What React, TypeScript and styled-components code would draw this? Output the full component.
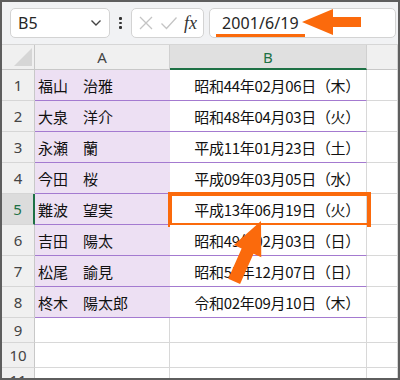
import styled, { createGlobalStyle } from "styled-components";

const GlobalStyle = createGlobalStyle`
  html, body {
    margin: 0;
    padding: 0;
    background: #ffffff;
  }
  body {
    font-family: "Noto Sans", "Noto Sans CJK JP", sans-serif;
  }
`;

const ORANGE = "#fb6a0c";
const GREEN = "#1e7145";
const PURPLE = "#a47ad0";

const people = [
  { name: "福山　治雅", date: "昭和44年02月06日（木）" },
  { name: "大泉　洋介", date: "昭和48年04月03日（火）" },
  { name: "永瀬　蘭", date: "平成11年01月23日（土）" },
  { name: "今田　桜", date: "平成09年03月05日（水）" },
  { name: "難波　望実", date: "平成13年06月19日（火）" },
  { name: "吉田　陽太", date: "昭和49年02月03日（日）" },
  { name: "松尾　諭見", date: "昭和55年12月07日（日）" },
  { name: "柊木　陽太郎", date: "令和02年09月10日（木）" },
];

const SELECTED_ROW = 5;

export default function App() {
  return (
    <>
      <GlobalStyle />
      <Frame>
        <Toolbar>
          <NameBox>
            <span>B5</span>
            <svg width="12" height="8" viewBox="0 0 12 8">
              <path d="M1.5 1.5 L6 6 L10.5 1.5" fill="none" stroke="#444" strokeWidth="1.4" />
            </svg>
          </NameBox>
          <Dots>
            <i />
            <i />
            <i />
          </Dots>
          <FuncBox>
            <svg width="16" height="16" viewBox="0 0 16 16">
              <path d="M2 2 L14 14 M14 2 L2 14" stroke="#c4c4c4" strokeWidth="1.3" fill="none" />
            </svg>
            <svg width="18" height="16" viewBox="0 0 18 16">
              <path d="M1.5 8.5 L6.5 13.5 L16.5 2.5" stroke="#c4c4c4" strokeWidth="1.3" fill="none" />
            </svg>
            <FxLabel>fx</FxLabel>
          </FuncBox>
          <FormulaBox>
            <FormulaText>2001/6/19</FormulaText>
          </FormulaBox>
        </Toolbar>

        <Sheet>
          <Row $height={25}>
            <Corner>
              <svg width="18" height="18" viewBox="0 0 18 18">
                <path d="M18 0 L18 18 L0 18 Z" fill="#d6d6d6" />
              </svg>
            </Corner>
            <ColHead $width={135}>A</ColHead>
            <ColHead $width={197} $active>B</ColHead>
            <ColHead $fill />
          </Row>

          {people.map((p, i) => {
            const n = i + 1;
            const active = n === SELECTED_ROW;
            return (
              <Row key={n} $height={31}>
                <RowHead $active={active}>{n}</RowHead>
                <NameCell>{p.name}</NameCell>
                <DateCell>
                  {p.date}
                  {active && <Highlight />}
                </DateCell>
                <EmptyCell $fill />
              </Row>
            );
          })}

          {[9, 10, 11].map((n) => (
            <Row key={n} $height={25}>
              <RowHead>{n}</RowHead>
              <EmptyCell $width={135} />
              <EmptyCell $width={197} />
              <EmptyCell $fill />
            </Row>
          ))}
        </Sheet>

        <Overlay width="400" height="380" viewBox="0 0 400 380">
          <polygon
            points="302,22 333,9 333,17 361,17 361,27 333,27 333,35"
            fill={ORANGE}
          />
          <polygon
            points="0,0 15,33 6.5,33 6.5,66 -6.5,66 -6.5,33 -15,33"
            fill={ORANGE}
            transform="translate(261 221) rotate(24)"
          />
        </Overlay>
      </Frame>
    </>
  );
}

const Frame = styled.div`
  position: relative;
  width: 400px;
  height: 380px;
  box-sizing: border-box;
  border: 2px solid #5e5e5e;
  overflow: hidden;
  background: #ffffff;
  display: flex;
  flex-direction: column;
`;

const Toolbar = styled.div`
  display: flex;
  align-items: center;
  height: 43px;
  flex-shrink: 0;
  box-sizing: border-box;
  padding: 0 0 0 8px;
  background: #f1f2f4;
  border-bottom: 1px solid #d6d6d6;
`;

const Box = styled.div`
  height: 30px;
  box-sizing: border-box;
  background: #ffffff;
  border: 1px solid #d3d3d3;
  border-radius: 5px;
  display: flex;
  align-items: center;
`;

const NameBox = styled(Box)`
  width: 100px;
  padding: 0 7px 0 7px;
  justify-content: space-between;
  font-size: 16px;
  color: #262626;
`;

const Dots = styled.div`
  width: 21px;
  display: flex;
  flex-direction: column;
  align-items: center;
  gap: 2px;

  i {
    display: block;
    width: 2.5px;
    height: 2.5px;
    background: #333;
    border-radius: 1px;
  }
`;

const FuncBox = styled(Box)`
  width: 73px;
  padding: 0 4px 0 6px;
  justify-content: space-between;
`;

const FxLabel = styled.span`
  font-family: "Liberation Serif", "DejaVu Serif", serif;
  font-style: italic;
  font-size: 18px;
  color: #333;
  padding-right: 2px;
`;

const FormulaBox = styled(Box)`
  flex: 1;
  margin-left: 5px;
  margin-right: 2px;
  padding-left: 12px;
`;

const FormulaText = styled.span`
  position: relative;
  font-size: 16px;
  color: #262626;
  letter-spacing: 0.1px;

  &::after {
    content: "";
    position: absolute;
    left: -6px;
    right: -6px;
    bottom: -3px;
    height: 3px;
    background: ${ORANGE};
  }
`;

const Sheet = styled.div`
  display: flex;
  flex-direction: column;
`;

const Row = styled.div<{ $height: number }>`
  display: flex;
  height: ${(p) => p.$height}px;
  flex-shrink: 0;
`;

const Corner = styled.div`
  width: 33px;
  box-sizing: border-box;
  background: #f0f0f0;
  border-right: 1px solid #c8c8c8;
  border-bottom: 1px solid #c8c8c8;
  display: flex;
  align-items: flex-end;
  justify-content: flex-end;
  padding: 0 2px 3px 0;
`;

const ColHead = styled.div<{ $width?: number; $active?: boolean; $fill?: boolean }>`
  ${(p) => (p.$fill ? "flex: 1;" : `width: ${p.$width}px;`)}
  box-sizing: border-box;
  display: flex;
  align-items: center;
  justify-content: center;
  font-size: 15px;
  color: ${(p) => (p.$active ? GREEN : "#444")};
  background: ${(p) => (p.$active ? "#e0e0e0" : "#f0f0f0")};
  border-right: 1px solid #d0d0d0;
  border-bottom: ${(p) => (p.$active ? `2px solid ${GREEN}` : "1px solid #c8c8c8")};
`;

const RowHead = styled.div<{ $active?: boolean }>`
  width: 33px;
  box-sizing: border-box;
  display: flex;
  align-items: center;
  justify-content: center;
  font-size: 15px;
  color: ${(p) => (p.$active ? GREEN : "#444")};
  background: ${(p) => (p.$active ? "#dcdcdc" : "#f0f0f0")};
  border-right: ${(p) => (p.$active ? `2px solid ${GREEN}` : "1px solid #c8c8c8")};
  border-bottom: 1px solid #d6d6d6;
`;

const NameCell = styled.div`
  width: 135px;
  box-sizing: border-box;
  display: flex;
  align-items: center;
  padding-left: 3px;
  font-family: "Noto Sans CJK JP", sans-serif;
  font-size: 15px;
  color: #111;
  background: #ede0f3;
  border-bottom: 1px solid ${PURPLE};
`;

const DateCell = styled.div`
  position: relative;
  width: 197px;
  box-sizing: border-box;
  display: flex;
  align-items: center;
  justify-content: flex-end;
  padding-right: 6px;
  font-family: "Noto Sans CJK JP", sans-serif;
  font-size: 15px;
  letter-spacing: -0.3px;
  color: #111;
  background: #ffffff;
  border-right: 1px solid #d8d8d8;
  border-bottom: 1px solid ${PURPLE};
`;

const EmptyCell = styled.div<{ $width?: number; $fill?: boolean }>`
  ${(p) => (p.$fill ? "flex: 1;" : `width: ${p.$width}px;`)}
  box-sizing: border-box;
  background: #ffffff;
  border-right: 1px solid #d8d8d8;
  border-bottom: 1px solid #d8d8d8;
`;

const Highlight = styled.div`
  position: absolute;
  top: -2px;
  left: -2px;
  right: -5px;
  bottom: -3px;
  border: 4px solid ${ORANGE};
  pointer-events: none;
`;

const Overlay = styled.svg`
  position: absolute;
  top: -2px;
  left: -2px;
  pointer-events: none;
`;
